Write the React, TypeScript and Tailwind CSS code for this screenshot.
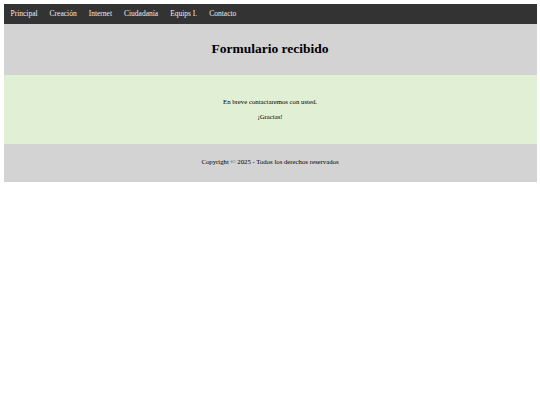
import React from 'react';

const links = ['Principal', 'Creación', 'Internet', 'Ciudadanía', 'Equips I.', 'Contacto'];

const App: React.FC = () => {
  return (
    <div className="p-[3.5px] font-['Liberation_Serif',serif] text-black">
      {/* Nav */}
      <nav className="bg-[#333333] h-[20px] flex items-center px-[7px] gap-[12px]">
        {links.map(link => (
          <a key={link} href="#" className="text-[#eeeeee] text-[7.5px] leading-none">
            {link}
          </a>
        ))}
      </nav>

      {/* Header */}
      <header className="bg-[#d3d3d3] h-[51px] flex items-center justify-center">
        <h1 className="text-[13.5px] font-bold">Formulario recibido</h1>
      </header>

      {/* Main */}
      <main className="bg-[#e1efd5] h-[69px] flex flex-col items-center justify-center gap-[7px] text-[6.75px] leading-[8px]">
        <p>En breve contactaremos con usted.</p>
        <p>¡Gracias!</p>
      </main>

      {/* Footer */}
      <footer className="bg-[#d3d3d3] h-[38px] flex items-center justify-center text-[6.75px]">
        <p>Copyright © 2025 - Todos los derechos reservados</p>
      </footer>
    </div>
  );
};

export default App;
